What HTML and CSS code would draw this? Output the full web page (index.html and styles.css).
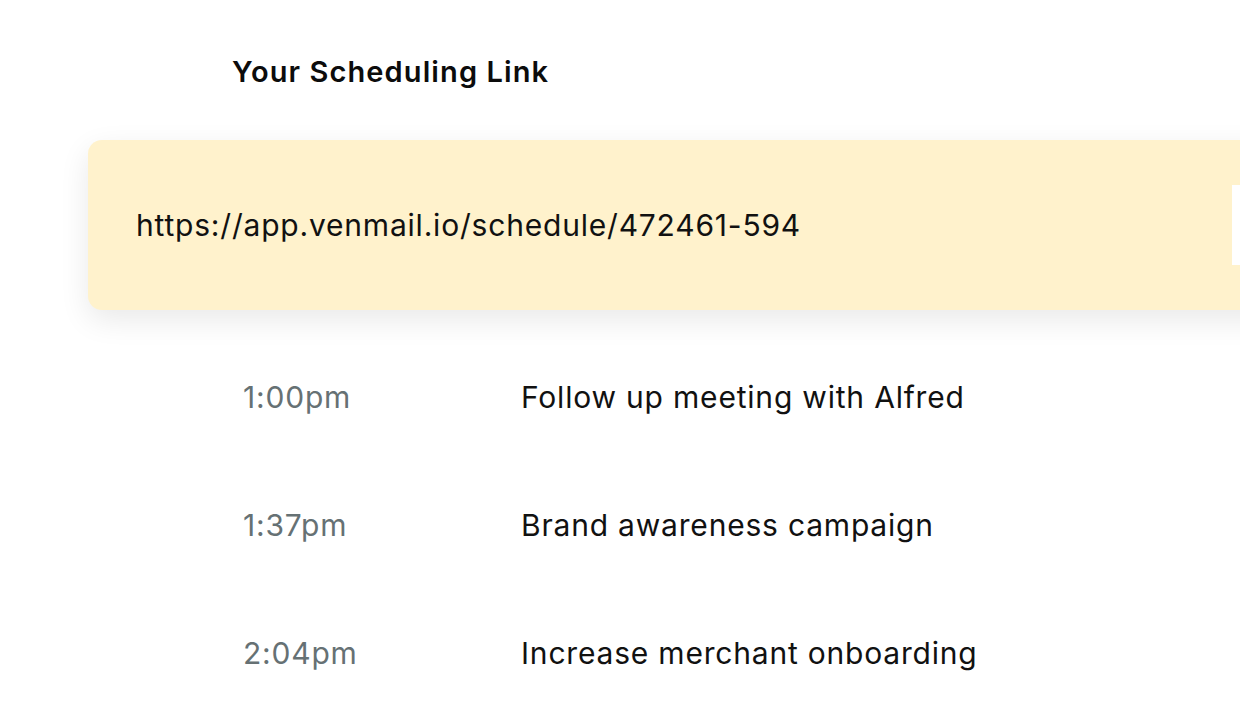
FILE: index.html
```html
<!DOCTYPE html>
<html>
<head>
<meta charset="utf-8">
<link rel="stylesheet" href="styles.css">
</head>
<body>
<div class="page">
  <h2 class="heading">Your Scheduling Link</h2>
  <div class="link-card">
    <span class="link-url">https://app.venmail.io/schedule/472461-594</span>
    <span class="copy-btn"></span>
  </div>
  <ul class="events">
    <li class="event"><span class="time">1:00pm</span><span class="title">Follow up meeting with Alfred</span></li>
    <li class="event"><span class="time">1:37pm</span><span class="title">Brand awareness campaign</span></li>
    <li class="event"><span class="time">2:04pm</span><span class="title">Increase merchant onboarding</span></li>
  </ul>
</div>
</body>
</html>
```
FILE: styles.css
```css
html, body {
  margin: 0;
  padding: 0;
  background: #ffffff;
  overflow: hidden;
}
body {
  font-family: Inter, "Noto Sans", sans-serif;
  color: #111111;
  width: 1240px;
  height: 712px;
}
.page {
  display: flex;
  flex-direction: column;
  overflow: hidden;
}
.heading {
  margin: 53px 0 0 232px;
  font-size: 29px;
  font-weight: 600;
  letter-spacing: 1.1px;
  line-height: 38px;
  color: #0c0c0c;
}
.link-card {
  margin: 49px 0 0 88px;
  width: 1312px;
  height: 170px;
  box-sizing: border-box;
  padding: 0 48px;
  display: flex;
  align-items: center;
  background: #fff2cc;
  border-radius: 14px;
  box-shadow: 0 10px 30px rgba(0, 0, 0, 0.09);
  flex-shrink: 0;
}
.link-url {
  flex: 1;
  font-size: 30px;
  letter-spacing: 0.8px;
  font-weight: 400;
  color: #111111;
}
.copy-btn {
  width: 120px;
  height: 80px;
  background: #ffffff;
}
.events {
  list-style: none;
  margin: 23px 0 0 0;
  padding: 0;
}
.event {
  display: flex;
  align-items: center;
  height: 128px;
  font-size: 30px;
  letter-spacing: 0.8px;
}
.time {
  width: 278px;
  padding-left: 243px;
  color: #667174;
}
.title {
  color: #111111;
}
```
